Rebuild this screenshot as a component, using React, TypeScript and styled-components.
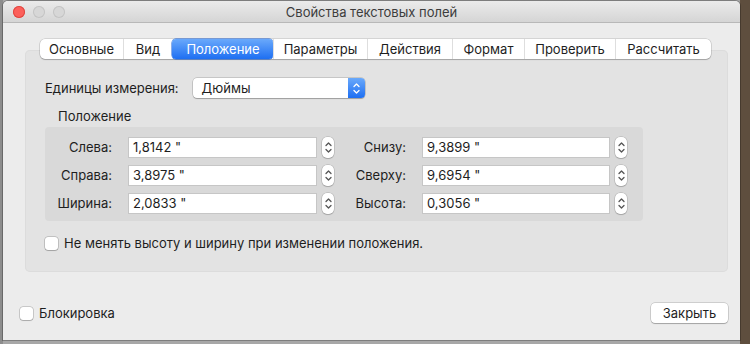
import React from 'react';
import styled, { createGlobalStyle } from 'styled-components';

const GlobalStyle = createGlobalStyle`
  html, body {
    margin: 0;
    padding: 0;
    width: 750px;
    height: 344px;
    overflow: hidden;
    background: #6f604f;
    font-family: "Inter", "Liberation Sans", sans-serif;
    font-size: 13px;
    color: #1e1e1e;
  }
  * {
    box-sizing: border-box;
  }
`;

const Desktop = styled.div`
  width: 750px;
  height: 344px;
  padding: 1px 10px 4px 3px;
  background: linear-gradient(90deg, #8d8d8d 0, #8d8d8d 3px, #a7a7a7 3px, #a7a7a7 740px, #5e4e3e 740px);
`;

const Window = styled.div`
  height: 100%;
  display: flex;
  flex-direction: column;
  background: #ececec;
  border-radius: 5px 5px 0 0;
  overflow: hidden;
  box-shadow: 0 0 0 1px rgba(0, 0, 0, 0.25);
`;

const TitleBar = styled.div`
  height: 22px;
  flex: none;
  display: flex;
  align-items: center;
  position: relative;
  background: linear-gradient(#ebebeb, #d5d5d5);
  border-bottom: 1px solid #b8b8b8;
`;

const Lights = styled.div`
  display: flex;
  gap: 8px;
  padding-left: 10px;
`;

const Light = styled.span<{ $color: string; $ring: string }>`
  width: 12px;
  height: 12px;
  border-radius: 50%;
  background: ${({ $color }) => $color};
  box-shadow: inset 0 0 0 1px ${({ $ring }) => $ring};
`;

const Title = styled.div`
  position: absolute;
  left: 0;
  right: 0;
  text-align: center;
  font-size: 13px;
  color: #3c3c3c;
  pointer-events: none;
`;

const Body = styled.div`
  flex: 1;
  display: flex;
  flex-direction: column;
  padding: 17px 12px 0 22px;
`;

const TabBox = styled.div`
  position: relative;
  margin-top: 10px;
  height: 222px;
  background: #e3e3e3;
  border-radius: 5px;
  box-shadow: inset 0 0 0 1px #dcdcdc;
  padding: 28px 0 0 20px;
`;

const Tabs = styled.div`
  position: absolute;
  top: -11px;
  left: 15px;
  display: flex;
  height: 20px;
  background: #fff;
  border-radius: 5px;
  box-shadow: 0 0 0 0.5px rgba(0, 0, 0, 0.2), 0 1px 1px rgba(0, 0, 0, 0.2);
`;

const Tab = styled.div<{ $active?: boolean; $w: number }>`
  width: ${({ $w }) => $w}px;
  display: flex;
  align-items: center;
  justify-content: center;
  font-size: 13px;
  border-left: 1px solid ${({ $active }) => ($active ? 'transparent' : '#dedede')};
  &:first-child {
    border-left: none;
  }
  ${({ $active }) =>
    $active
      ? `
    background: linear-gradient(#6aa9fb, #1e6ff2);
    color: #fff;
    border-radius: 4px;
    box-shadow: 0 0 0 0.5px #1a5fd1;
  `
      : ''}
`;

const UnitsRow = styled.div`
  display: flex;
  align-items: center;
  gap: 14px;
  height: 20px;
`;

const Popup = styled.div`
  width: 172px;
  height: 20px;
  display: flex;
  align-items: center;
  background: #fff;
  border-radius: 4px;
  box-shadow: 0 0 0 0.5px rgba(0, 0, 0, 0.25), 0 1px 1px rgba(0, 0, 0, 0.2);
  padding-left: 9px;
  justify-content: space-between;
`;

const PopupArrows = styled.div`
  width: 17px;
  height: 20px;
  border-radius: 0 4px 4px 0;
  background: linear-gradient(#6aa9fb, #1e6ff2);
  display: flex;
  align-items: center;
  justify-content: center;
`;

const GroupLabel = styled.div`
  margin: 9px 0 0 13px;
  height: 18px;
  line-height: 18px;
`;

const Inner = styled.div`
  width: 598px;
  height: 94px;
  background: #d9d9d9;
  border-radius: 4px;
  margin-top: 2px;
  display: grid;
  grid-template-columns: 83px 189px 20px 85px 188px 33px;
  grid-auto-rows: 28px;
  padding-top: 6px;
  align-items: center;
`;

const FieldLabel = styled.div`
  text-align: right;
  padding-right: 16px;
`;

const Input = styled.div`
  height: 21px;
  background: #fff;
  box-shadow: inset 0 0 0 1px #c6c6c6, inset 0 1px 0 #b0b0b0;
  display: flex;
  align-items: center;
  padding-left: 5px;
`;

const StepperWrap = styled.div`
  display: flex;
  padding-left: 5px;
`;

const StepperBox = styled.div`
  width: 12px;
  height: 21px;
  background: #fff;
  border-radius: 5px;
  box-shadow: 0 0 0 0.5px rgba(0, 0, 0, 0.2), 0 1px 1px rgba(0, 0, 0, 0.15);
  display: flex;
  align-items: center;
  justify-content: center;
`;

const CheckRow = styled.label<{ $top: number }>`
  display: flex;
  align-items: center;
  gap: 6px;
  margin-top: ${({ $top }) => $top}px;
`;

const Check = styled.span`
  width: 13px;
  height: 13px;
  background: #fff;
  border-radius: 3px;
  box-shadow: 0 0 0 0.5px rgba(0, 0, 0, 0.3), 0 1px 1px rgba(0, 0, 0, 0.15);
`;

const Footer = styled.div`
  display: flex;
  align-items: center;
  justify-content: space-between;
  margin: 31px 0 0 -5px;
`;

const Button = styled.div`
  width: 77px;
  height: 20px;
  display: flex;
  align-items: center;
  justify-content: center;
  background: #fff;
  border-radius: 4px;
  box-shadow: 0 0 0 0.5px rgba(0, 0, 0, 0.25), 0 1px 1px rgba(0, 0, 0, 0.2);
`;

const Arrows = ({ color }: { color: string }) => (
  <svg width="7" height="13" viewBox="0 0 7 13" fill="none" stroke={color} strokeWidth="1.3" strokeLinecap="round" strokeLinejoin="round">
    <path d="M1 4.5 L3.5 2 L6 4.5" />
    <path d="M1 8.5 L3.5 11 L6 8.5" />
  </svg>
);

const Stepper = () => (
  <StepperWrap>
    <StepperBox>
      <Arrows color="#555" />
    </StepperBox>
  </StepperWrap>
);

const tabs: [string, number][] = [
  ['Основные', 83],
  ['Вид', 49],
  ['Положение', 101],
  ['Параметры', 94],
  ['Действия', 85],
  ['Формат', 72],
  ['Проверить', 91],
  ['Рассчитать', 96],
];

const rows = [
  ['Слева:', '1,8142 "', 'Снизу:', '9,3899 "'],
  ['Справа:', '3,8975 "', 'Сверху:', '9,6954 "'],
  ['Ширина:', '2,0833 "', 'Высота:', '0,3056 "'],
];

export default function App() {
  return (
    <>
      <GlobalStyle />
      <Desktop>
        <Window>
          <TitleBar>
            <Lights>
              <Light $color="#fc605b" $ring="#de4741" />
              <Light $color="#d7d7d7" $ring="#c4c4c4" />
              <Light $color="#d7d7d7" $ring="#c4c4c4" />
            </Lights>
            <Title>Свойства текстовых полей</Title>
          </TitleBar>
          <Body>
            <TabBox>
              <Tabs>
                {tabs.map(([t, w]) => (
                  <Tab key={t} $w={w} $active={t === 'Положение'}>
                    {t}
                  </Tab>
                ))}
              </Tabs>
              <UnitsRow>
                <span>Единицы измерения:</span>
                <Popup>
                  <span>Дюймы</span>
                  <PopupArrows>
                    <Arrows color="#fff" />
                  </PopupArrows>
                </Popup>
              </UnitsRow>
              <GroupLabel>Положение</GroupLabel>
              <Inner>
                {rows.map((r) => (
                  <React.Fragment key={r[0]}>
                    <FieldLabel>{r[0]}</FieldLabel>
                    <Input>{r[1]}</Input>
                    <Stepper />
                    <FieldLabel>{r[2]}</FieldLabel>
                    <Input>{r[3]}</Input>
                    <Stepper />
                  </React.Fragment>
                ))}
              </Inner>
              <CheckRow $top={14}>
                <Check />
                <span>Не менять высоту и ширину при изменении положения.</span>
              </CheckRow>
            </TabBox>
            <Footer>
              <CheckRow $top={0}>
                <Check />
                <span>Блокировка</span>
              </CheckRow>
              <Button>Закрыть</Button>
            </Footer>
          </Body>
        </Window>
      </Desktop>
    </>
  );
}
